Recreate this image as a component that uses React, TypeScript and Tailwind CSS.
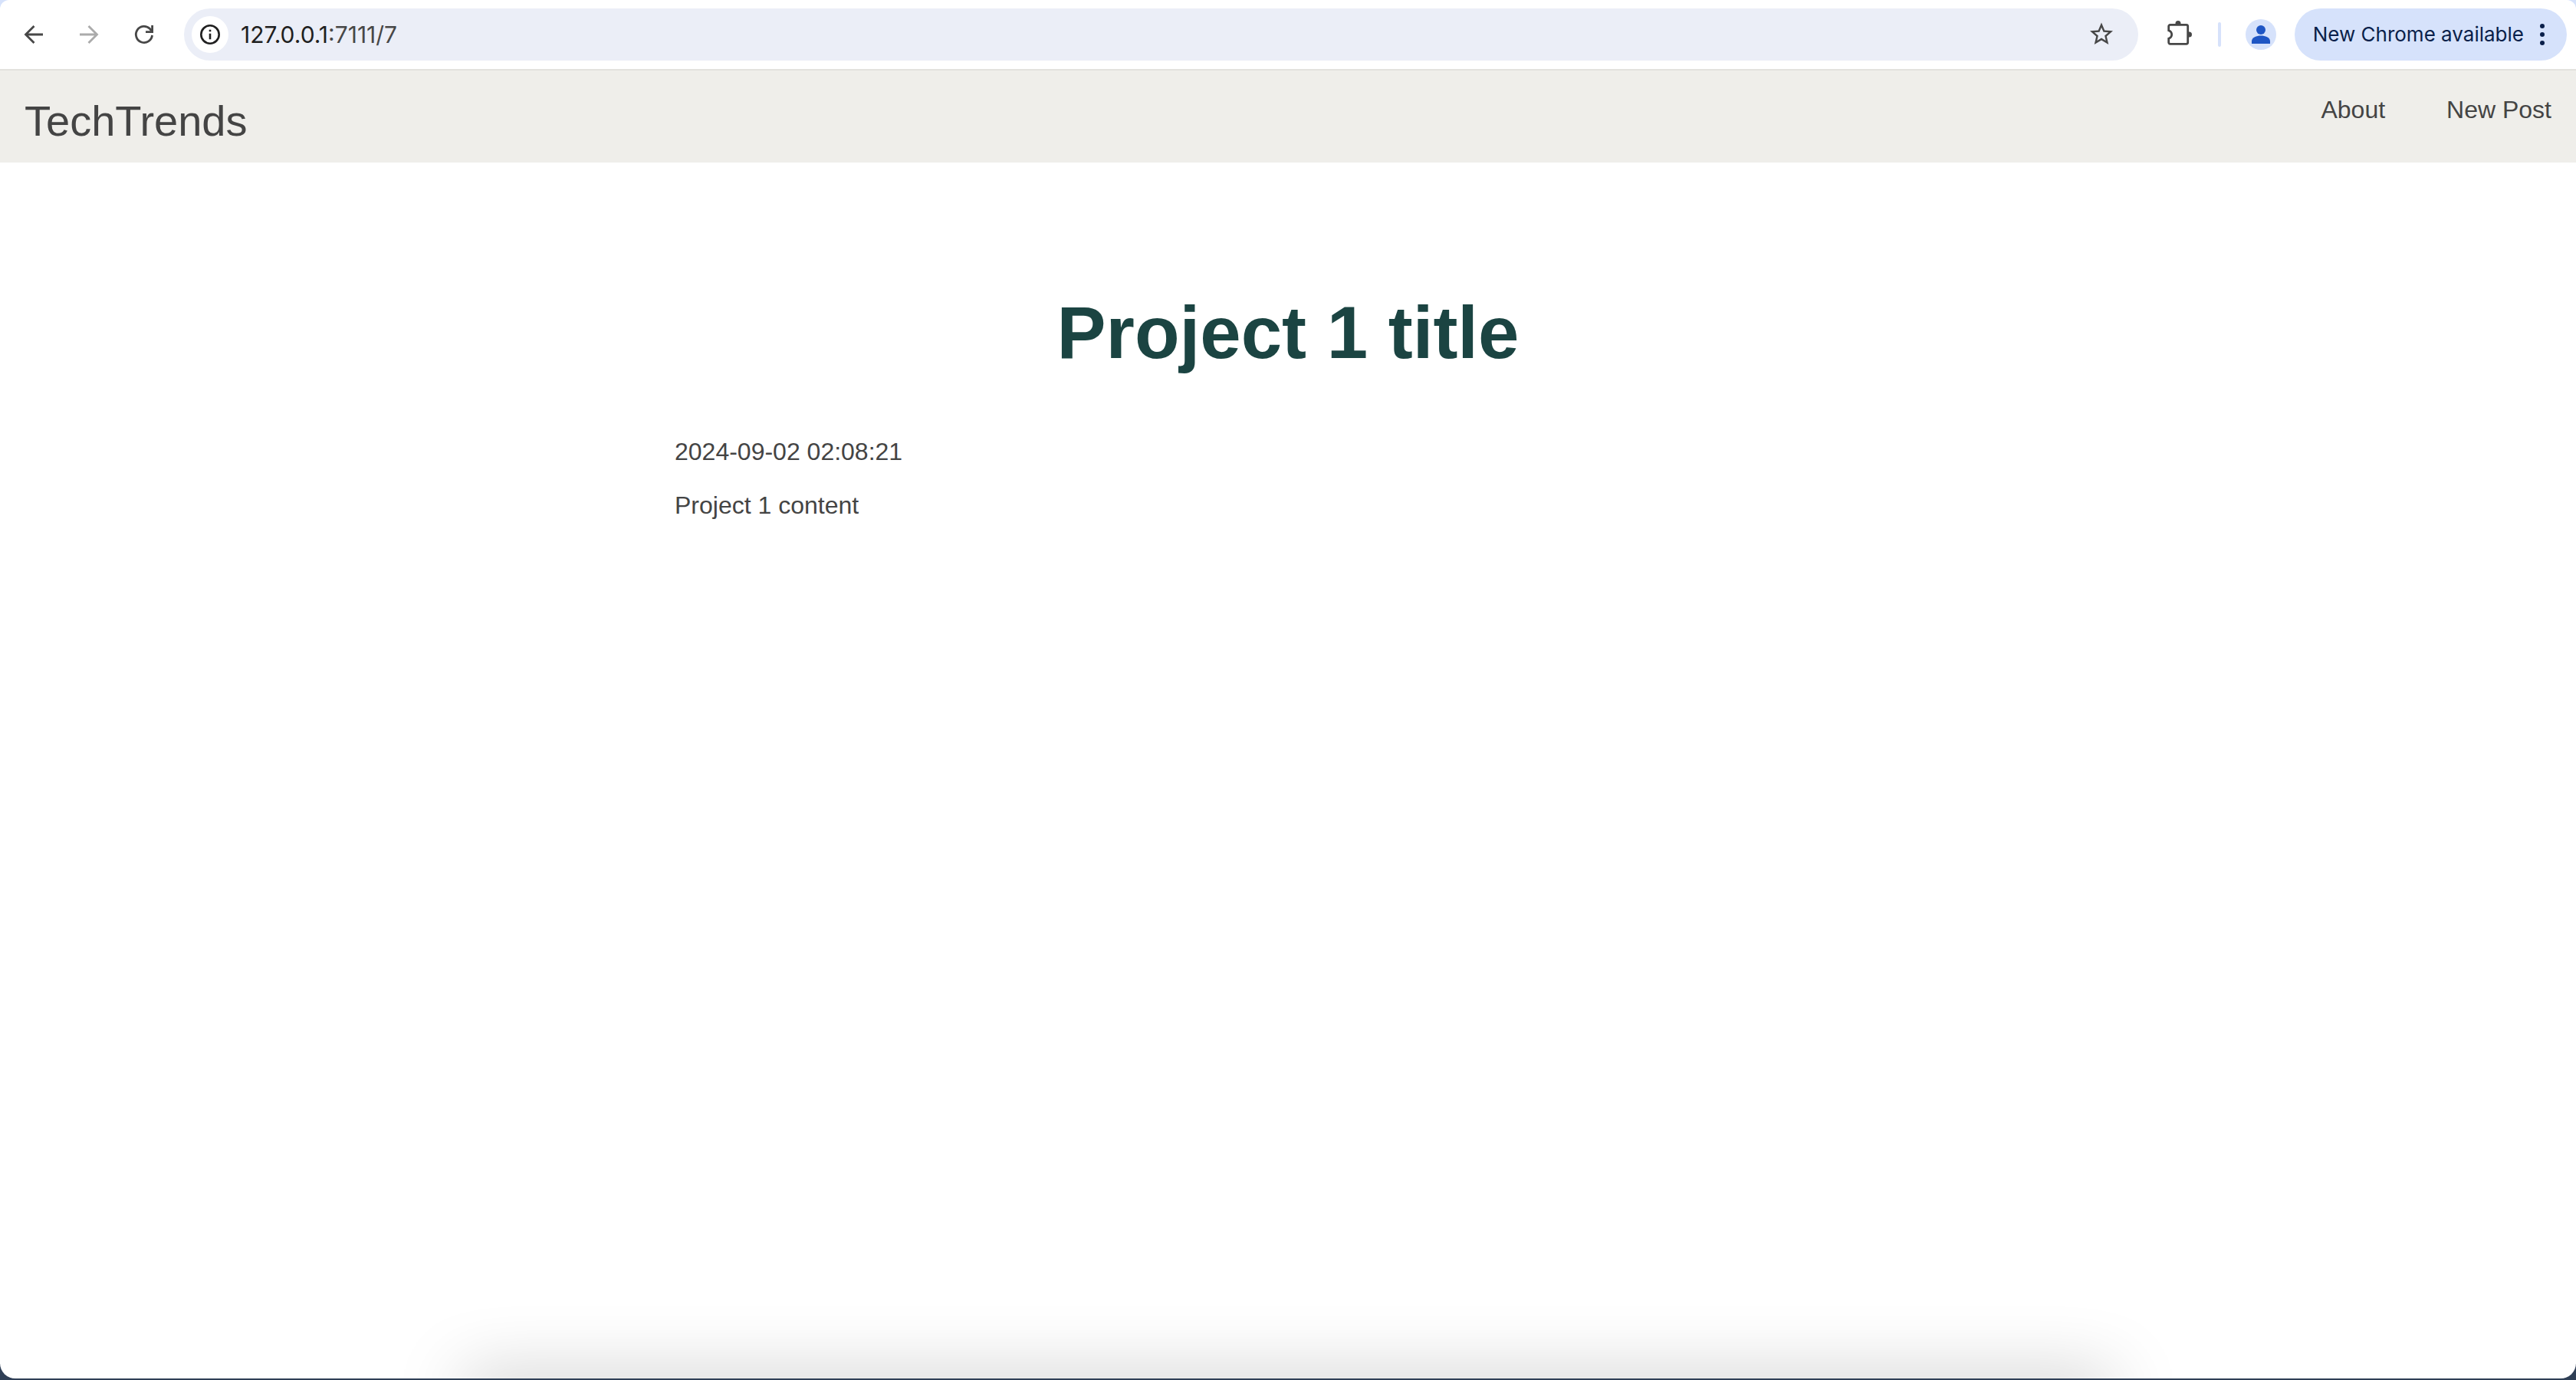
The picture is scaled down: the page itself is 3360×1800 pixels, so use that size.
import React from "react";

type IconProps = { children: React.ReactNode; className?: string };

function Icon({ children, className = "" }: IconProps) {
  return (
    <svg aria-hidden="true" viewBox="0 0 40 40" className={`size-10 ${className}`} fill="none" stroke="currentColor" strokeWidth="2.800">
      {children}
    </svg>
  );
}

function Toolbar() {
  return (
    <div className="bg-[#d6e2fb]">
      <div className="flex h-[92px] items-center rounded-t-xl border-b-2 border-[#e3e2de] bg-white pr-3 pl-6 text-[#474747]">
        <nav aria-label="Browser" className="flex gap-8">
          <button type="button" aria-label="Back">
            <Icon>
              <path d="M32 20H10M20.500 9 9.500 20l11 11" />
            </Icon>
          </button>
          <button type="button" aria-label="Forward" disabled className="text-[#ababab]">
            <Icon>
              <path d="M8 20h22M19.500 9l11 11-11 11" />
            </Icon>
          </button>
          <button type="button" aria-label="Reload">
            <Icon>
              <path d="M30.500 21A10.600 10.600 0 1 1 27.500 12.500L30 15.500" />
              <path d="M30.600 8v8.600H22" />
            </Icon>
          </button>
        </nav>
        <div className="ml-8 flex h-[68px] flex-1 items-center rounded-full bg-[#ebeef7] pr-7 pl-2.5">
          <button type="button" aria-label="View site information" className="flex size-12 items-center justify-center rounded-full bg-white text-[#1f1f1f]">
            <Icon>
              <circle cx="20" cy="20" r="11.700" strokeWidth="2.600" />
              <path d="M20 18.700v7.600M20 13.700v2.600" strokeWidth="2.600" />
            </Icon>
          </button>
          <div className="ml-4 flex-1 font-[Inter,sans-serif] text-[30px] leading-8 text-[#1f1f1f]">
            127.0.0.1<span className="text-[#474747]">:7111/7</span>
          </div>
          <button type="button" aria-label="Bookmark this tab">
            <Icon>
              <path
                fill="currentColor"
                stroke="none"
                transform="translate(2 1.500) scale(1.500)"
                d="M22 9.240l-7.190-.62L12 2 9.190 8.630 2 9.240l5.460 4.730L5.820 21 12 17.270 18.180 21l-1.630-7.030L22 9.240zM12 15.400l-3.760 2.270 1-4.280-3.320-2.880 4.380-.38L12 6.100l1.710 4.040 4.380.38-3.320 2.880 1 4.280L12 15.400z"
              />
            </Icon>
          </button>
        </div>
        <button type="button" aria-label="Extensions" className="ml-8">
          <Icon>
            <path d="M7.700 14.700V9.300a2 2 0 0 1 2-2h21a2 2 0 0 1 2 2v21a2 2 0 0 1-2 2h-21a2 2 0 0 1-2-2v-5q4-1.500 4-5.300t-4-5.300z" />
            <path fill="currentColor" stroke="none" d="M16.500 7V5.500a3.500 3.500 0 0 1 7 0V7zM33 16.500h1.500a3.500 3.500 0 0 1 0 7H33z" />
          </Icon>
        </button>
        <div className="ml-8 h-8 w-1 rounded-full bg-[#d6e2fb]" />
        <button type="button" aria-label="Profile" className="ml-8 flex size-10 items-center justify-center rounded-full bg-[#d6e2fb]">
          <svg aria-hidden="true" viewBox="0 0 40 40" className="size-10" fill="#1f56c4">
            <circle cx="20" cy="14" r="6" />
            <path d="M8 32v-3.500c0-4.500 6.500-7 12-7s12 2.500 12 7V32z" />
          </svg>
        </button>
        <button type="button" className="ml-6 flex h-[68px] items-center rounded-full bg-[#d6e2fb] pr-3 pl-6 font-[Inter,sans-serif] text-[26px] leading-8 text-[#0a1f4a]">
          New Chrome available
          <svg aria-hidden="true" viewBox="0 0 40 40" className="ml-1 size-10" fill="currentColor">
            <circle cx="20" cy="9" r="3" />
            <circle cx="20" cy="20" r="3" />
            <circle cx="20" cy="31" r="3" />
          </svg>
        </button>
      </div>
    </div>
  );
}

export default function App() {
  return (
    <div className="flex min-h-screen flex-col bg-[#2f3f56] pb-0.5 font-['Liberation_Sans',Arial,sans-serif] text-[32px] leading-[46px] text-[#444]">
      <div className="relative flex flex-1 flex-col overflow-hidden rounded-b-[20px] bg-white">
        <Toolbar />
        <header className="flex h-[120px] items-start justify-between bg-[#efeeea] px-8">
          <a href="#home" className="pt-8 text-[56px] leading-[68px]">TechTrends</a>
          <nav aria-label="Site" className="flex gap-20 pt-7">
            <a href="#about">About</a>
            <a href="#new-post">New Post</a>
          </nav>
        </header>
        <main className="mx-auto w-full max-w-[1600px] pt-[164px]">
          <h1 className="text-center text-[96px] leading-[116px] font-bold text-[#1b4442]">Project 1 title</h1>
          <p className="mt-[74px]">2024-09-02 02:08:21</p>
          <p className="mt-6">Project 1 content</p>
        </main>
        <div className="absolute inset-x-[18%] top-full h-10 shadow-[0_0_90px_rgba(0,0,0,0.28)]" />
      </div>
    </div>
  );
}
